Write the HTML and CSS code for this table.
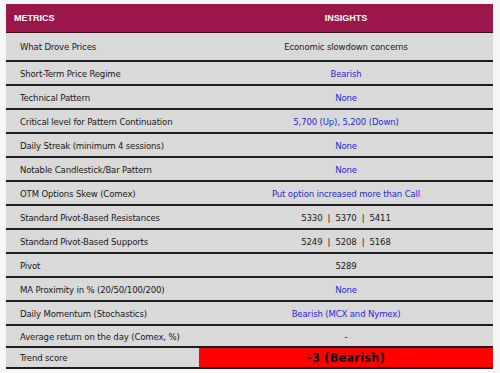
FILE: index.html
```html
<!DOCTYPE html>
<html>
<head>
<meta charset="utf-8">
<link rel="stylesheet" href="styles.css">
</head>
<body>
<div class="table">
  <div class="row head">
    <div class="c1">METRICS</div>
    <div class="c2">INSIGHTS</div>
  </div>
  <div class="row first">
    <div class="c1">What Drove Prices</div>
    <div class="c2">Economic slowdown concerns</div>
  </div>
  <div class="row">
    <div class="c1">Short-Term Price Regime</div>
    <div class="c2 blue">Bearish</div>
  </div>
  <div class="row">
    <div class="c1">Technical Pattern</div>
    <div class="c2 blue">None</div>
  </div>
  <div class="row">
    <div class="c1">Critical level for Pattern Continuation</div>
    <div class="c2 blue">5,700 (Up), 5,200 (Down)</div>
  </div>
  <div class="row">
    <div class="c1">Daily Streak (minimum 4 sessions)</div>
    <div class="c2 blue">None</div>
  </div>
  <div class="row">
    <div class="c1">Notable Candlestick/Bar Pattern</div>
    <div class="c2 blue">None</div>
  </div>
  <div class="row">
    <div class="c1">OTM Options Skew (Comex)</div>
    <div class="c2 blue">Put option increased more than Call</div>
  </div>
  <div class="row">
    <div class="c1">Standard Pivot-Based Resistances</div>
    <div class="c2">5330 &nbsp;| &nbsp;5370 &nbsp;| &nbsp;5411</div>
  </div>
  <div class="row">
    <div class="c1">Standard Pivot-Based Supports</div>
    <div class="c2">5249 &nbsp;| &nbsp;5208 &nbsp;| &nbsp;5168</div>
  </div>
  <div class="row">
    <div class="c1">Pivot</div>
    <div class="c2">5289</div>
  </div>
  <div class="row">
    <div class="c1">MA Proximity in % (20/50/100/200)</div>
    <div class="c2 blue">None</div>
  </div>
  <div class="row">
    <div class="c1">Daily Momentum (Stochastics)</div>
    <div class="c2 blue">Bearish (MCX and Nymex)</div>
  </div>
  <div class="row short">
    <div class="c1">Average return on the day (Comex, %)</div>
    <div class="c2">-</div>
  </div>
  <div class="row last">
    <div class="c1">Trend score</div>
    <div class="c2 red">-3 (Bearish)</div>
  </div>
</div>
</body>
</html>
```

FILE: styles.css
```css
html, body {
  margin: 0;
  padding: 0;
  background: #f6f6f6;
}
body {
  padding: 4px 0 0 6px;
  font-family: "DejaVu Sans Condensed", "DejaVu Sans", sans-serif;
  font-size: 9.5px;
  letter-spacing: -0.15px;
  color: #1a1a1a;
}
.table {
  width: 487px;
  display: flex;
  flex-direction: column;
}
.row {
  display: grid;
  grid-template-columns: 193px 1fr;
  height: 22px;
  background: #d9d9d9;
  border-bottom: 2px solid #1c1c1c;
}
.row > div {
  display: flex;
  align-items: center;
}
.c1 {
  padding-left: 14px;
}
.c2 {
  justify-content: center;
}
.head {
  height: 28px;
  background: #9b174b;
  border-bottom: 1px solid #3a1020;
  color: #ffffff;
  font-family: "Liberation Sans", Arial, sans-serif;
  font-weight: bold;
  font-size: 9px;
  letter-spacing: 0;
}
.head .c1 {
  padding-left: 8px;
}
.first {
  height: 27px;
}
.short {
  height: 20px;
}
.last {
  height: 19px;
}
.blue {
  color: #2a2ad0;
}
.red {
  background: #ff0000;
  font-weight: bold;
  font-size: 12.5px;
  letter-spacing: 0.3px;
  color: #111;
}
```
